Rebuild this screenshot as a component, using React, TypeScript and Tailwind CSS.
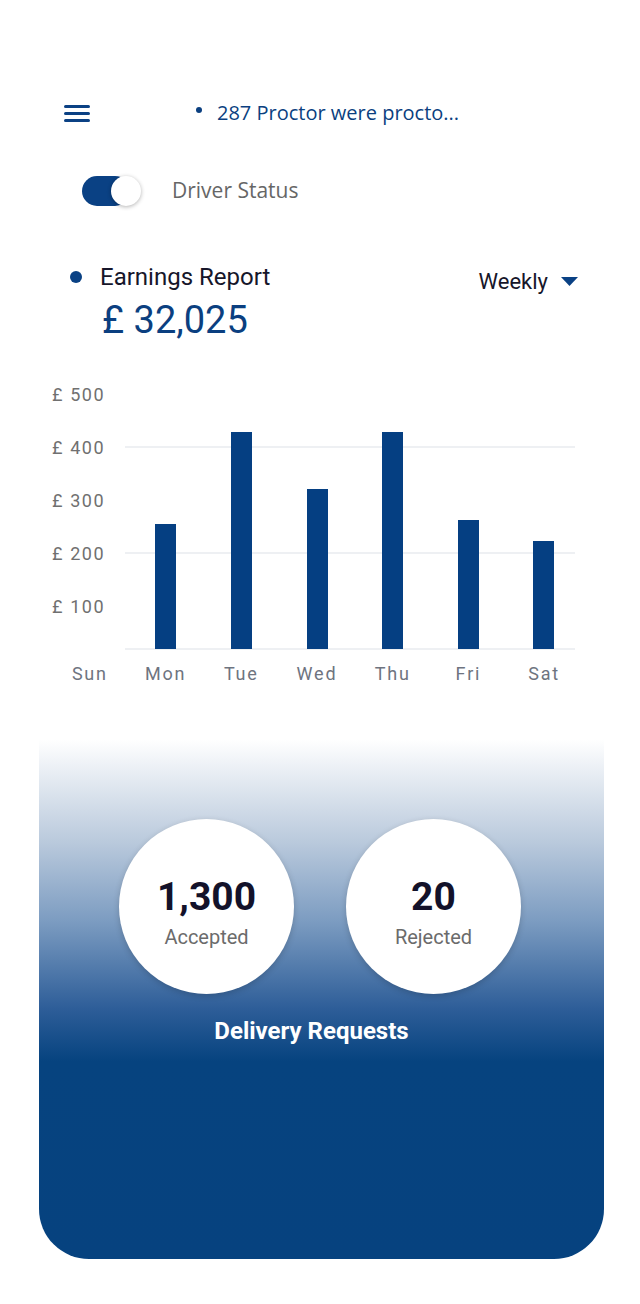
import React from "react";

const bars = [
  { x: 30, top: 156 },
  { x: 106, top: 64 },
  { x: 182, top: 121 },
  { x: 257, top: 64 },
  { x: 333, top: 152 },
  { x: 408, top: 173 },
];

const days = ["Sun", "Mon", "Tue", "Wed", "Thu", "Fri", "Sat"];
const yLabels = ["£ 500", "£ 400", "£ 300", "£ 200", "£ 100"];

function StatCircle({ value, label }: { value: string; label: string }) {
  return (
    <div className="w-[175px] h-[175px] rounded-full bg-white flex flex-col items-center justify-center shadow-[0_2px_6px_rgba(0,0,0,0.18)]">
      <span className="text-[39px] leading-[44px] font-bold text-[#13122a] mt-[12px]">{value}</span>
      <span className="text-[20px] leading-[26px] text-[#6b6b6b] mt-[5px]">{label}</span>
    </div>
  );
}

export default function App() {
  return (
    <div className="w-[640px] h-[1304px] bg-white font-['Roboto',sans-serif] overflow-hidden">
      {/* top bar */}
      <div className="flex items-center h-[26px] mt-[100px] pl-[64px] font-['Open_Sans','Noto_Sans',sans-serif]">
        <svg width="26" height="20" viewBox="0 0 26 20">
          <rect x="0" y="2" width="26" height="3" rx="1.5" fill="#0b4184" />
          <rect x="0" y="9" width="26" height="3" rx="1.5" fill="#0b4184" />
          <rect x="0" y="16" width="26" height="3" rx="1.5" fill="#0b4184" />
        </svg>
        <div className="w-[6px] h-[6px] rounded-full bg-[#0b3f80] ml-[106px] mt-[-6px]" />
        <span className="ml-[15px] text-[20px] text-[#0b3f80]">287 Proctor were procto...</span>
      </div>

      {/* driver status */}
      <div className="flex items-center mt-[49px] pl-[82px] font-['Open_Sans','Noto_Sans',sans-serif]">
        <div className="relative w-[60px] h-[30px]">
          <div className="absolute left-0 top-0 w-[48px] h-[30px] rounded-full bg-[#0a4184]" />
          <div className="absolute left-[29px] top-0 w-[30px] h-[30px] rounded-full bg-white shadow-[0_1px_4px_rgba(0,0,0,0.3)]" />
        </div>
        <span className="ml-[30px] text-[21px] text-[#666666]">Driver Status</span>
      </div>

      {/* earnings header */}
      <div className="flex items-start justify-between mt-[55px] pl-[70px] pr-[62px]">
        <div className="flex flex-col">
          <div className="flex items-center h-[30px]">
            <div className="w-[12px] h-[12px] rounded-full bg-[#0a4184]" />
            <span className="ml-[18px] text-[24px] text-[#16162a]">Earnings Report</span>
          </div>
          <span className="ml-[32px] text-[38px] leading-[46px] text-[#0b3f80] mt-[5px]">£ 32,025</span>
        </div>
        <div className="flex items-center h-[30px] mt-[5px]">
          <span className="text-[22px] text-[#16162a]">Weekly</span>
          <svg width="17" height="9" viewBox="0 0 17 9" className="ml-[13px]">
            <path d="M0 0 L17 0 L8.5 9 Z" fill="#0a4184" />
          </svg>
        </div>
      </div>

      {/* chart */}
      <div className="flex mt-[25px] ml-[52px] h-[284px]">
        <div className="flex flex-col w-[73px]">
          {yLabels.map((l) => (
            <div key={l} className="h-[53px] flex items-center text-[18px] tracking-[1.6px] text-[#707070]">
              {l}
            </div>
          ))}
        </div>
        <svg width="455" height="284" viewBox="0 0 455 284">
          <line x1="0" y1="79" x2="450" y2="79" stroke="#eef0f3" strokeWidth="2" />
          <line x1="-5" y1="185" x2="450" y2="185" stroke="#eef0f3" strokeWidth="2" />
          <line x1="0" y1="281" x2="450" y2="281" stroke="#eef0f3" strokeWidth="2" />
          {bars.map((b, i) => (
            <rect key={i} x={b.x} y={b.top} width="21" height={281 - b.top} fill="#053f82" />
          ))}
        </svg>
      </div>
      <div className="grid grid-cols-7 w-[530px] ml-[52px] mt-[10px]">
        {days.map((d) => (
          <div key={d} className="text-center text-[18px] tracking-[1.8px] text-[#6e7480] leading-[24px]">
            {d}
          </div>
        ))}
      </div>

      {/* delivery requests panel */}
      <div className="ml-[39px] mr-[36px] mt-[53px] h-[520px] rounded-b-[50px] bg-[linear-gradient(to_bottom,#ffffff_0%,#b9c9dc_20%,#7c9cc1_35%,#2d5d98_52%,#06437f_62%,#06427f_100%)] flex flex-col items-center">
        <div className="flex gap-[52px] mt-[80px] pr-[3px]">
          <StatCircle value="1,300" label="Accepted" />
          <StatCircle value="20" label="Rejected" />
        </div>
        <span className="mt-[19px] text-[24px] font-bold text-white pr-[20px]">Delivery Requests</span>
      </div>
    </div>
  );
}
